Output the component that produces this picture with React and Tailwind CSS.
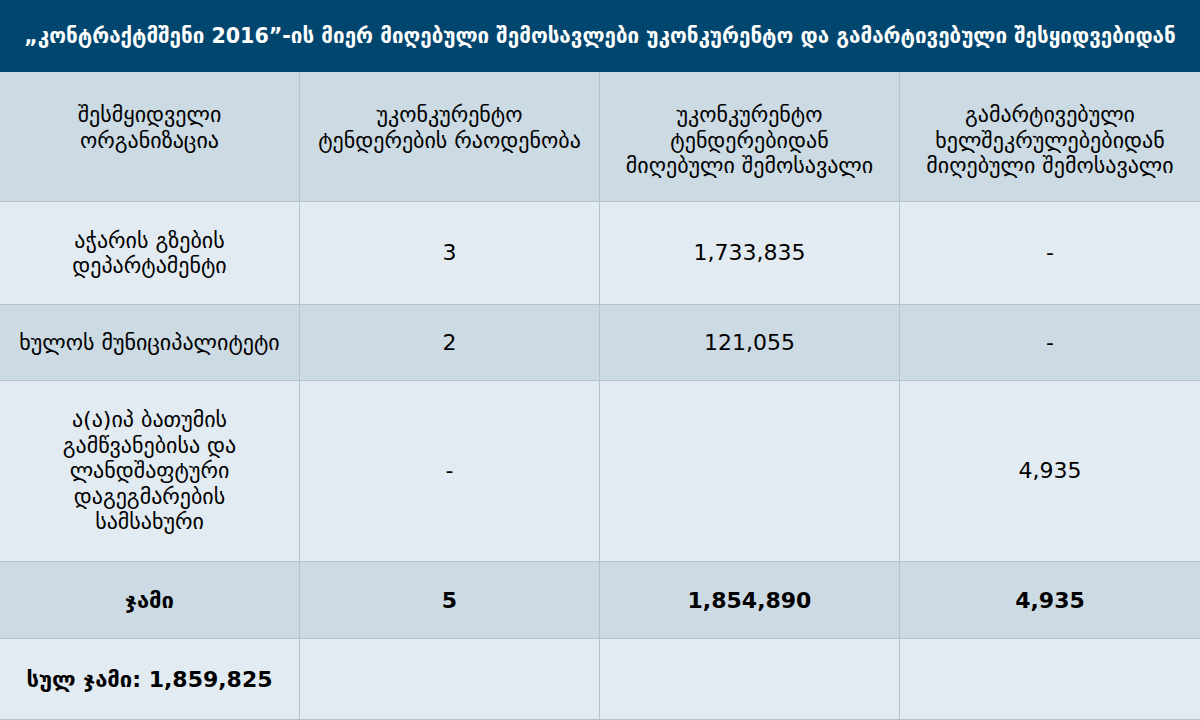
// საჯარო შესყიდვების ცხრილი — "კონტრაქტმშენი 2016"

const font = { fontFamily: '"DejaVu Sans", "Noto Sans", sans-serif' };

const rows = [
  {
    org: ["აჭარის გზების", "დეპარტამენტი"],
    count: "3",
    tender: "1,733,835",
    simple: "-",
    h: "h-[103px]",
    bg: "bg-[#e3ebf2]",
  },
  {
    org: ["ხულოს მუნიციპალიტეტი"],
    count: "2",
    tender: "121,055",
    simple: "-",
    h: "h-[76px]",
    bg: "bg-[#ccdae3]",
  },
  {
    org: ["ა(ა)იპ ბათუმის", "გამწვანებისა და", "ლანდშაფტური", "დაგეგმარების", "სამსახური"],
    count: "-",
    tender: "",
    simple: "4,935",
    h: "h-[181px]",
    bg: "bg-[#e3ebf2]",
  },
];

const head = [
  ["შესმყიდველი", "ორგანიზაცია"],
  ["უკონკურენტო", "ტენდერების რაოდენობა"],
  ["უკონკურენტო", "ტენდერებიდან", "მიღებული შემოსავალი"],
  ["გამარტივებული", "ხელშეკრულებებიდან", "მიღებული შემოსავალი"],
];

function Lines({ lines }) {
  return (
    <div>
      {lines.map((l) => (
        <div key={l} className="whitespace-nowrap">
          {l}
        </div>
      ))}
    </div>
  );
}

function Cell({ children, className = "items-center" }) {
  return (
    <div
      className={`flex justify-center text-center px-2 border-r border-b border-[#b5c3ce] last:border-r-0 ${className}`}
    >
      {children}
    </div>
  );
}

export default function App() {
  return (
    <div className="w-[1200px] h-[720px] overflow-hidden bg-[#e3ebf2] text-black" style={font}>
      {/* სათაური */}
      <div className="h-[72px] bg-[#01466f] flex items-center justify-center">
        <h1 className="text-white font-bold text-[20.6px] whitespace-nowrap">
          „კონტრაქტმშენი 2016”-ის მიერ მიღებული შემოსავლები უკონკურენტო და გამარტივებული შესყიდვებიდან
        </h1>
      </div>

      {/* ცხრილის თავი — ტექსტი ზემოთ არის გასწორებული */}
      <div className="grid grid-cols-4 h-[130px] bg-[#ccdae3] text-[22px] leading-[25.5px]">
        {head.map((h, i) => (
          <Cell key={i} className="items-start pt-[30px]">
            <Lines lines={h} />
          </Cell>
        ))}
      </div>

      {rows.map((r) => (
        <div key={r.org[0]} className={`grid grid-cols-4 ${r.h} ${r.bg} text-[22px] leading-[25.5px]`}>
          <Cell>
            <Lines lines={r.org} />
          </Cell>
          <Cell>{r.count}</Cell>
          <Cell>{r.tender}</Cell>
          <Cell>{r.simple}</Cell>
        </div>
      ))}

      {/* ჯამი */}
      <div className="grid grid-cols-4 h-[77px] bg-[#ccdae3] text-[22px] font-bold">
        <Cell>ჯამი</Cell>
        <Cell>5</Cell>
        <Cell>1,854,890</Cell>
        <Cell>4,935</Cell>
      </div>

      <div className="grid grid-cols-4 h-[81px] bg-[#e3ebf2] text-[22px] font-bold">
        <Cell className="items-center whitespace-nowrap">სულ ჯამი: 1,859,825</Cell>
        <Cell />
        <Cell />
        <Cell />
      </div>
    </div>
  );
}
